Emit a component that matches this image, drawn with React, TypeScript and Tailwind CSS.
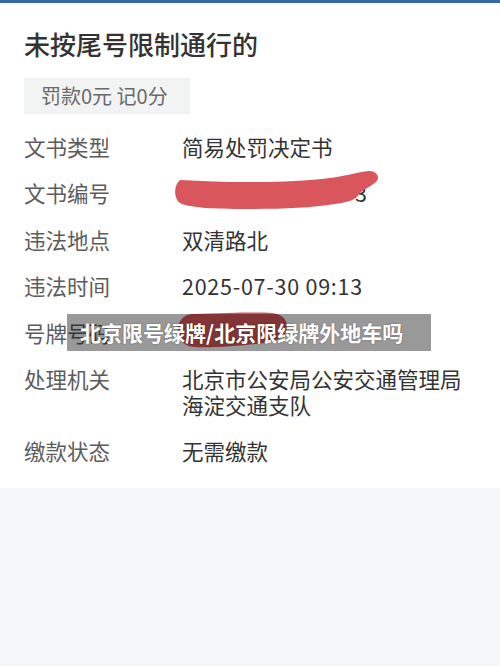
import React from "react";

const font = { fontFamily: '"Noto Sans CJK SC", "Noto Sans", sans-serif' };

function Row({ label, children }: { label: string; children: React.ReactNode }) {
  return (
    <div className="flex items-start leading-[26px] text-[21.5px]">
      <div className="w-[158px] shrink-0 text-[#5c5c5c]">{label}</div>
      <div className="flex-1 text-[#333333] relative">{children}</div>
    </div>
  );
}

export default function App() {
  return (
    <div className="relative w-[500px] h-[666px] bg-[#f3f7f8] overflow-hidden" style={font}>
      <div className="h-[3px] bg-[#3468a8]" />
      <div className="bg-white px-[24px] pt-[24px] pb-[24px]">
        <div className="text-[26px] leading-[34px] text-[#333333] font-medium">未按尾号限制通行的</div>
        <div className="mt-[17px] w-[166px] h-[36px] bg-[#f2f3f3] flex items-center pl-[17px] text-[20px] text-[#6a6a6a]">
          罚款0元 记0分
        </div>
        <div className="mt-[20px] flex flex-col gap-[20.4px]">
          <Row label="文书类型">简易处罚决定书</Row>
          <Row label="文书编号">
            <span className="pl-[173px]">3</span>
            <svg className="absolute left-[-12px] top-[-16px]" width="215" height="52" viewBox="0 0 215 52">
              <path
                d="M 10 16 C 60 19, 120 19, 160 14 C 180 11, 190 8, 198 7 C 206 6, 211 13, 206 18 C 200 23, 192 26, 189 30 C 187 35, 180 38, 165 40 C 140 44, 110 45, 75 45 C 45 45, 20 44, 10 39 C 4 35, 3 22, 10 16 Z"
                fill="#d9575c"
              />
            </svg>
          </Row>
          <Row label="违法地点">双清路北</Row>
          <Row label="违法时间">
            <span className="tracking-[0.75px]">2025-07-30 09:13</span>
          </Row>
          <Row label="号牌号码">
            <span className="pl-[50px]">京</span>
            <svg className="absolute left-[-6px] top-[-10px]" width="115" height="42" viewBox="0 0 115 42">
              <path
                d="M 16 4 C 50 3, 80 2, 96 3 C 106 4, 112 10, 111 18 C 110 28, 100 32, 80 34 C 60 36, 35 38, 18 37 C 6 36, 2 28, 2 20 C 2 10, 8 5, 16 4 Z"
                fill="#d9575c"
              />
            </svg>
          </Row>
          <Row label="处理机关">
            北京市公安局公安交通管理局
            <br />
            海淀交通支队
          </Row>
          <Row label="缴款状态">无需缴款</Row>
        </div>
      </div>
      <div className="absolute left-[67px] top-[314px] w-[364px] h-[37px] bg-black/40 flex items-center pl-[13px]">
        <span
          className="text-white text-[21px] font-bold leading-none"
          style={{ textShadow: "0 0 2px rgba(0,0,0,0.35)" }}
        >
          北京限号绿牌/北京限绿牌外地车吗
        </span>
      </div>
    </div>
  );
}
